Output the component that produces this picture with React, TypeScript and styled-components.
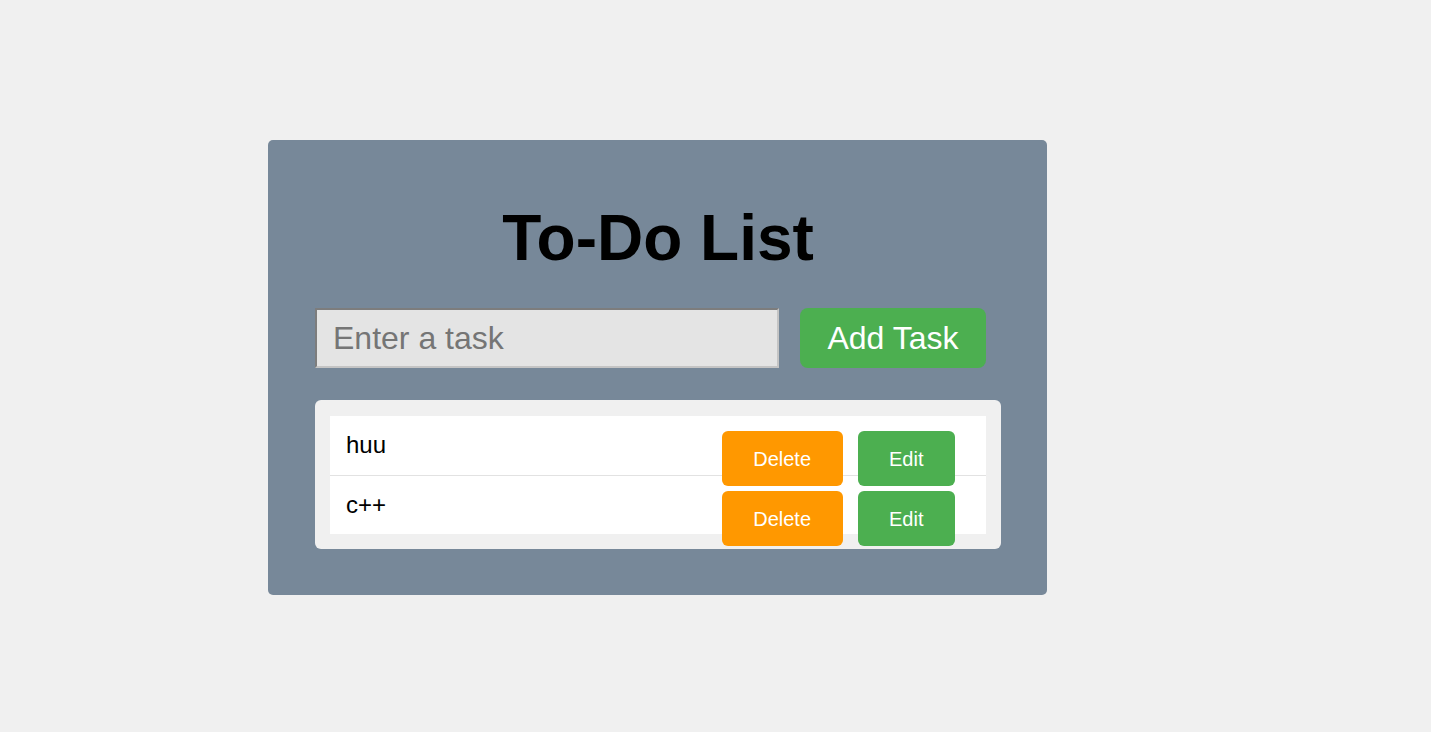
import React from "react";
import styled, { createGlobalStyle } from "styled-components";

const GlobalStyle = createGlobalStyle`
  html, body {
    margin: 0;
    padding: 0;
    background: #f0f0f0;
    font-family: "Liberation Sans", Arial, sans-serif;
  }
  * { box-sizing: border-box; }
`;

const Page = styled.div`
  min-height: 732px;
  padding: 140px 0 0 268px;
`;

const Card = styled.div`
  width: 779px;
  background: #778899;
  border-radius: 5px;
  padding: 61px 46px 46px 47px;
`;

const Title = styled.h1`
  margin: 0 0 33px;
  font-size: 64px;
  line-height: 74px;
  font-weight: bold;
  text-align: center;
  color: #000;
`;

const InputRow = styled.div`
  display: flex;
  gap: 21px;
  margin-bottom: 32px;
`;

const TaskInput = styled.input`
  width: 464px;
  height: 60px;
  border: 2px solid;
  border-top-color: #7d7d7d;
  border-left-color: #7d7d7d;
  border-bottom-color: #c4c4c4;
  border-right-color: #c4c4c4;
  background: #e4e4e4;
  padding: 0 16px;
  font-family: "Liberation Sans", Arial, sans-serif;
  font-size: 32px;
  color: #000;
  outline: none;
  &::placeholder {
    color: #757575;
  }
`;

const AddButton = styled.button`
  height: 60px;
  width: 186px;
  padding: 0;
  border: none;
  border-radius: 8px;
  background: #4caf50;
  color: #fff;
  font-family: "Liberation Sans", Arial, sans-serif;
  font-size: 32px;
  cursor: pointer;
`;

const ListBox = styled.div`
  background: #f0f0f0;
  border-radius: 6px;
  padding: 16px 15px 15px;
`;

const List = styled.ul`
  list-style: none;
  margin: 0;
  padding: 0;
`;

const Item = styled.li`
  display: flex;
  align-items: flex-start;
  height: 60px;
  padding: 15px 31px 0 16px;
  background: #fff;
  border-bottom: 1px solid #e2e2e2;
  font-size: 24px;
  line-height: 28px;
  color: #000;
  &:last-child {
    border-bottom: none;
    height: 58px;
  }
`;

const ItemText = styled.span`
  flex: 1;
`;

const Actions = styled.div`
  display: flex;
  gap: 15px;
  position: relative;
  z-index: 1;
`;

const ActionButton = styled.button<{ $tone: "orange" | "green" }>`
  height: 55px;
  padding: 2px 31.5px 0;
  border: none;
  border-radius: 6px;
  background: ${(p) => (p.$tone === "orange" ? "#ff9800" : "#4caf50")};
  color: #fff;
  font-family: "Liberation Sans", Arial, sans-serif;
  font-size: 20px;
  cursor: pointer;
`;

const tasks = ["huu", "c++"];

export default function App() {
  return (
    <>
      <GlobalStyle />
      <Page>
        <Card>
          <Title>To-Do List</Title>
          <InputRow>
            <TaskInput placeholder="Enter a task" />
            <AddButton>Add Task</AddButton>
          </InputRow>
          <ListBox>
            <List>
              {tasks.map((t) => (
                <Item key={t}>
                  <ItemText>{t}</ItemText>
                  <Actions>
                    <ActionButton $tone="orange">Delete</ActionButton>
                    <ActionButton $tone="green">Edit</ActionButton>
                  </Actions>
                </Item>
              ))}
            </List>
          </ListBox>
        </Card>
      </Page>
    </>
  );
}
